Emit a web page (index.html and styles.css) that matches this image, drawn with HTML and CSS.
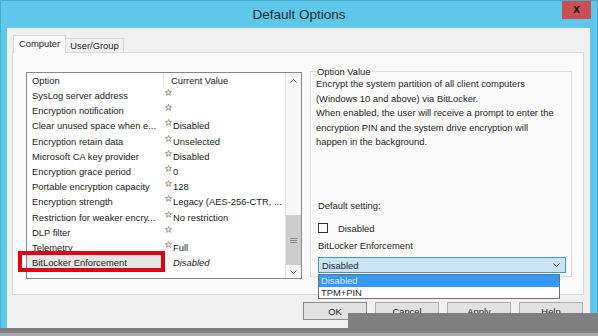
FILE: index.html
```html
<!DOCTYPE html>
<html lang="en">
<head>
    <meta charset="UTF-8">
    <title>Default Options</title>
    <link rel="stylesheet" href="styles.css">
</head>
<body>
    <div class="window">
        <div class="titlebar">
            <span class="title">Default Options</span>
            <span class="close">x</span>
        </div>
        <div class="dialog">
            <div class="tabs">
                <span class="tab active">Computer</span>
                <span class="tab">User/Group</span>
            </div>
            <div class="page">
                <div class="list">
                    <div class="rows">
                        <div class="head"><span class="c1">Option</span><span class="c2">Current Value</span></div>
                        <div class="row"><span class="c1">SysLog server address</span><span class="c2"><svg class="star" viewBox="0 0 8 8"><polygon points="4,0.6 5,3 7.5,3 5.5,4.6 6.3,7.3 4,5.8 1.7,7.3 2.5,4.6 0.5,3 3,3"/></svg></span></div>
                        <div class="row"><span class="c1">Encryption notification</span><span class="c2"><svg class="star" viewBox="0 0 8 8"><polygon points="4,0.6 5,3 7.5,3 5.5,4.6 6.3,7.3 4,5.8 1.7,7.3 2.5,4.6 0.5,3 3,3"/></svg></span></div>
                        <div class="row"><span class="c1">Clear unused space when e...</span><span class="c2"><svg class="star" viewBox="0 0 8 8"><polygon points="4,0.6 5,3 7.5,3 5.5,4.6 6.3,7.3 4,5.8 1.7,7.3 2.5,4.6 0.5,3 3,3"/></svg>Disabled</span></div>
                        <div class="row"><span class="c1">Encryption retain data</span><span class="c2"><svg class="star" viewBox="0 0 8 8"><polygon points="4,0.6 5,3 7.5,3 5.5,4.6 6.3,7.3 4,5.8 1.7,7.3 2.5,4.6 0.5,3 3,3"/></svg>Unselected</span></div>
                        <div class="row"><span class="c1">Microsoft CA key provider</span><span class="c2"><svg class="star" viewBox="0 0 8 8"><polygon points="4,0.6 5,3 7.5,3 5.5,4.6 6.3,7.3 4,5.8 1.7,7.3 2.5,4.6 0.5,3 3,3"/></svg>Disabled</span></div>
                        <div class="row"><span class="c1">Encryption grace period</span><span class="c2"><svg class="star" viewBox="0 0 8 8"><polygon points="4,0.6 5,3 7.5,3 5.5,4.6 6.3,7.3 4,5.8 1.7,7.3 2.5,4.6 0.5,3 3,3"/></svg>0</span></div>
                        <div class="row"><span class="c1">Portable encryption capacity</span><span class="c2"><svg class="star" viewBox="0 0 8 8"><polygon points="4,0.6 5,3 7.5,3 5.5,4.6 6.3,7.3 4,5.8 1.7,7.3 2.5,4.6 0.5,3 3,3"/></svg>128</span></div>
                        <div class="row"><span class="c1">Encryption strength</span><span class="c2"><svg class="star" viewBox="0 0 8 8"><polygon points="4,0.6 5,3 7.5,3 5.5,4.6 6.3,7.3 4,5.8 1.7,7.3 2.5,4.6 0.5,3 3,3"/></svg>Legacy (AES-256-CTR, ...</span></div>
                        <div class="row"><span class="c1">Restriction for weaker encry...</span><span class="c2"><svg class="star" viewBox="0 0 8 8"><polygon points="4,0.6 5,3 7.5,3 5.5,4.6 6.3,7.3 4,5.8 1.7,7.3 2.5,4.6 0.5,3 3,3"/></svg>No restriction</span></div>
                        <div class="row"><span class="c1">DLP filter</span><span class="c2"><svg class="star" viewBox="0 0 8 8"><polygon points="4,0.6 5,3 7.5,3 5.5,4.6 6.3,7.3 4,5.8 1.7,7.3 2.5,4.6 0.5,3 3,3"/></svg></span></div>
                        <div class="row"><span class="c1">Telemetry</span><span class="c2"><svg class="star" viewBox="0 0 8 8"><polygon points="4,0.6 5,3 7.5,3 5.5,4.6 6.3,7.3 4,5.8 1.7,7.3 2.5,4.6 0.5,3 3,3"/></svg>Full</span></div>
                        <div class="row picked"><span class="c1">BitLocker Enforcement</span><span class="c2">Disabled</span></div>
                    </div>
                    <div class="scroll">
                        <span class="arrow"><svg width="7" height="4" viewBox="0 0 7 4"><polyline points="0.5,3.5 3.5,0.5 6.5,3.5"/></svg></span>
                        <span class="track">
                            <span class="thumb"><svg width="7" height="5" viewBox="0 0 7 5"><path d="M0 0.5H7M0 2.5H7M0 4.5H7"/></svg></span>
                        </span>
                        <span class="arrow down"><svg width="7" height="4" viewBox="0 0 7 4"><polyline points="0.5,0.5 3.5,3.5 6.5,0.5"/></svg></span>
                    </div>
                    <div class="mark"></div>
                </div>
                <fieldset class="value">
                    <legend>Option Value</legend>
                    <p class="desc">Encrypt the system partition of all client computers<br>(Windows 10 and above) via BitLocker.<br>When enabled, the user will receive a prompt to enter the<br>encryption PIN and the system drive encryption will<br>happen in the background.</p>
                    <div class="defaults">
                        <p class="lbl gap">Default setting:</p>
                        <div class="check"><span class="box"></span>Disabled</div>
                        <p class="lbl">BitLocker Enforcement</p>
                        <div class="combo">
                            <span>Disabled</span>
                            <svg width="7" height="4" viewBox="0 0 7 4"><polyline points="0.5,0.5 3.5,3.5 6.5,0.5"/></svg>
                            <ul class="dropdown">
                                <li class="sel">Disabled</li>
                                <li>TPM+PIN</li>
                            </ul>
                        </div>
                    </div>
                </fieldset>
            </div>
            <div class="buttons">
                <button class="default">OK</button>
                <button>Cancel</button>
                <button>Apply</button>
                <button>Help</button>
            </div>
        </div>
        <div class="cover"></div>
    </div>
    <div class="shade"></div>
</body>
</html>
```

FILE: styles.css
```css
*{
    box-sizing: border-box;
}
body{
    margin: 0;
    width: 598px;
    height: 336px;
    overflow: hidden;
    background: #808080;
    font-family: "Liberation Sans", Arial, sans-serif;
    font-size: 9.4px;
    color: #1e1e1e;
}
.window{
    position: relative;
    height: 328px;
    background: #5fc7ea;
    border: 1px solid #45abd3;
    border-bottom: none;
}
.titlebar{
    position: relative;
    height: 27px;
    display: flex;
    justify-content: center;
}
.title{
    font-size: 13.5px;
    line-height: 27px;
    color: #1f2b33;
}
.close{
    position: absolute;
    right: 6px;
    top: 0;
    width: 29px;
    height: 18px;
    background: #c75050;
    color: #1a1a1a;
    font-weight: bold;
    font-size: 12px;
    line-height: 16px;
    text-align: center;
}
.dialog{
    position: relative;
    height: 300px;
    margin: 0 7px 0 6px;
    background: #f0f0f0;
    padding: 7px 6px 0 5px;
}
.tabs{
    display: flex;
    align-items: flex-end;
    height: 17px;
    margin-left: 1px;
}
.tab{
    height: 14px;
    width: 58px;
    border: 1px solid #d9d9d9;
    border-bottom: none;
    border-left: none;
    text-align: center;
    line-height: 13px;
    background: #f0f0f0;
}
.tab.active{
    position: relative;
    z-index: 1;
    width: 53px;
    height: 18px;
    margin-bottom: -1px;
    border-left: 1px solid #d9d9d9;
    background: #fafafa;
    line-height: 16px;
}
.page{
    height: 243px;
    border: 1px solid #d9d9d9;
    background: #fafafa;
    padding: 19px 0 0 13px;
    display: flex;
    align-items: flex-start;
    gap: 8px;
}
.list{
    position: relative;
    display: flex;
    width: 276px;
    height: 207px;
    border: 1px solid #828790;
    background: #fff;
}
.rows{
    flex: 1;
    color: #1a1a1a;
}
.head, .row{
    display: flex;
    height: 15.2px;
    line-height: 15.2px;
    white-space: nowrap;
}
.head{
    height: 15px;
    line-height: 15px;
}
.c1{
    width: 136px;
    padding-left: 5px;
    overflow: hidden;
}
.c2{
    padding-left: 2px;
}
.head .c2{
    border-left: 1px solid #e5e5e5;
    padding-left: 7px;
    flex: 1;
}
.star{
    width: 7px;
    height: 7px;
    margin-right: 1px;
    vertical-align: top;
    margin-top: 1px;
}
.star polygon{
    fill: #f6f3ea;
    stroke: #8c8270;
    stroke-width: 0.9;
}
.picked .c1{
    background: #e6e6e6;
}
.picked .c2{
    padding-left: 10px;
    font-style: italic;
}
.scroll{
    display: flex;
    flex-direction: column;
    width: 16px;
    border-left: 1px solid #e6e6e6;
    background: #f7f7f7;
}
.arrow{
    display: flex;
    justify-content: center;
    align-items: center;
    height: 15px;
}
.arrow.down{
    height: 13px;
}
.arrow polyline, .combo polyline{
    fill: none;
    stroke: #606060;
    stroke-width: 1;
}
.track{
    flex: 1;
}
.thumb{
    display: flex;
    justify-content: center;
    align-items: center;
    height: 50px;
    margin-top: 127px;
    background: #cdcdcd;
}
.thumb path{
    stroke: #858585;
    stroke-width: 1;
}
.mark{
    position: absolute;
    left: -9px;
    top: 178px;
    width: 147px;
    height: 21px;
    border: 4px solid #e3000f;
}
.value{
    display: flex;
    flex-direction: column;
    margin: -6px 0 0 0;
    width: 262px;
    height: 211px;
    border: 1px solid #dcdcdc;
    padding: 0 5px 3px 5px;
}
legend{
    padding: 0 1px;
    line-height: 11px;
}
.desc{
    margin: 0;
    line-height: 14.6px;
}
.defaults{
    margin-top: auto;
    padding-left: 2px;
}
.lbl{
    margin: 0 0 4px;
    line-height: 14px;
}
.lbl.gap{
    margin-bottom: 8px;
}
.check{
    display: flex;
    align-items: center;
    height: 14px;
    margin-bottom: 4px;
}
.box{
    width: 10px;
    height: 10px;
    border: 1px solid #333;
    background: #fff;
    margin-right: 10px;
}
.combo{
    position: relative;
    display: flex;
    justify-content: space-between;
    align-items: center;
    height: 16px;
    padding: 0 5px 0 3px;
    border: 1px solid #4c90d0;
    background: #c9e4f6;
}
.combo polyline{
    stroke: #333;
}
.dropdown{
    position: absolute;
    left: -1px;
    top: 16px;
    width: 242px;
    margin: 0;
    padding: 0;
    list-style: none;
    border: 1px solid #707070;
    background: #fff;
}
.dropdown li{
    height: 11px;
    line-height: 11px;
    padding-left: 2px;
}
.dropdown li.sel{
    height: 12px;
    line-height: 12px;
    background: #3399ff;
    color: #dcecff;
}
.buttons{
    display: flex;
    justify-content: flex-end;
    gap: 8px;
    margin-top: 7px;
    padding-right: 1px;
}
button{
    width: 64px;
    height: 18px;
    padding: 0;
    border: 1px solid #adadad;
    background: #e1e1e1;
    font: inherit;
    color: #1e1e1e;
}
button.default{
    border-color: #8c8c8c;
}
.cover{
    position: absolute;
    left: 347px;
    top: 312px;
    right: -1px;
    bottom: 0;
    background: #7f7f7f;
}
.shade{
    height: 8px;
    background: linear-gradient(#7f7f7f 5px, #a9a9a9 5px);
}
```
